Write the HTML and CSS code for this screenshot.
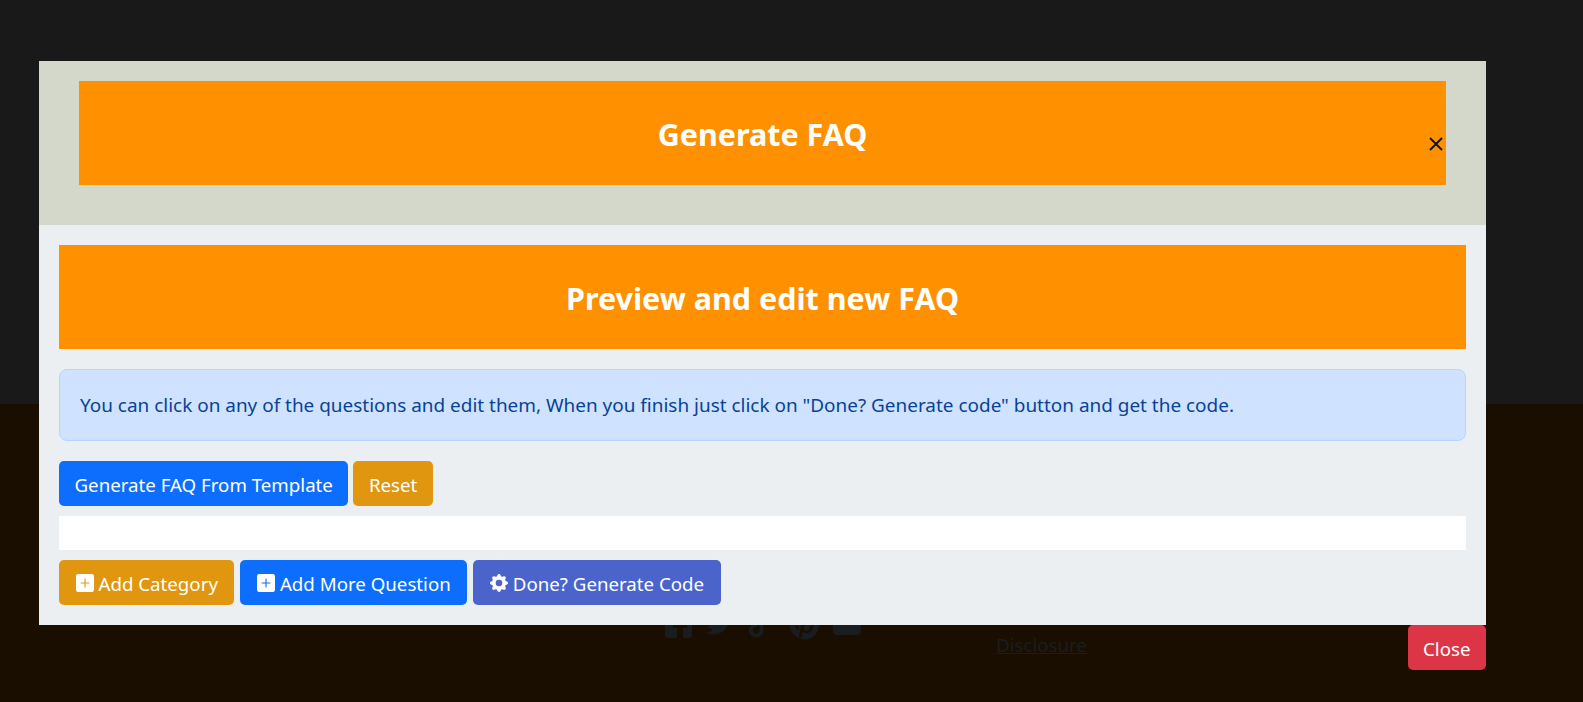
FILE: index.html
```html
<!DOCTYPE html>
<html lang="en">
<head>
<meta charset="utf-8">
<title>Generate FAQ</title>
<link rel="stylesheet" href="styles.css">
</head>
<body>
<div class="page">
  <div class="page-top"></div>
  <footer class="page-footer">
    <div class="socials">
      <svg class="social s-fb" viewBox="0 0 27 27"><path d="M3 0h21a3 3 0 0 1 3 3v21a3 3 0 0 1-3 3h-6V17h4l1-5h-5V9c0-1.500 1-2.500 2.500-2.500H23V2h-4c-4 0-7 3-7 7v3H8v5h4v10H3a3 3 0 0 1-3-3V3a3 3 0 0 1 3-3z"/></svg>
      <svg class="social s-tw" viewBox="0 0 512 512"><path d="M459 152c.3 4.500.3 9.100.3 13.600 0 138.700-105.600 298.600-298.600 298.600-59.500 0-114.700-17.200-161.100-47.100 8.400 1 16.600 1.300 25.300 1.300 49.100 0 94.200-16.600 130.300-44.800-46.100-1-84.800-31.200-98.100-72.800 6.500 1 13 1.600 19.800 1.600 9.400 0 18.800-1.300 27.600-3.600-48.100-9.700-84.100-52-84.100-103v-1.300c14 7.800 30.200 12.700 47.400 13.300-28.300-18.800-46.800-51-46.800-87.400 0-19.500 5.200-37.400 14.300-53 51.700 63.700 129.300 105.300 216.400 109.800-1.600-7.800-2.600-15.900-2.600-24 0-57.800 46.800-104.900 104.900-104.900 30.200 0 57.500 12.700 76.700 33.100 23.700-4.500 46.500-13.300 66.600-25.300-7.800 24.400-24.400 44.800-46.100 57.800 21.100-2.300 41.600-8.100 60.400-16.200-14.300 20.800-32.200 39.300-52.600 54.200z"/></svg>
      <svg class="social s-tt" viewBox="0 0 448 512"><path d="M448 209.900a210.100 210.100 0 0 1-122.800-39.300v178.800A162.600 162.600 0 1 1 185 188.300v89.900a74.600 74.600 0 1 0 52.200 71.200V0h88a121.200 121.200 0 0 0 1.900 22.200h0a122.200 122.200 0 0 0 53.900 80.200 121.400 121.400 0 0 0 67 20.100z"/></svg>
      <svg class="social s-pi" viewBox="0 0 496 512"><path d="M496 256c0 137-111 248-248 248-25.600 0-50.200-3.900-73.400-11.100 10.100-16.500 25.200-43.500 30.800-65 3-11.600 15.400-59 15.400-59 8.100 15.400 31.700 28.500 56.800 28.500 74.800 0 128.700-68.800 128.700-154.300 0-81.900-66.900-143.200-152.900-143.200-107 0-163.900 71.800-163.900 150.100 0 36.400 19.400 81.700 50.300 96.100 4.700 2.200 7.200 1.200 8.300-3.300.8-3.400 5-20.300 6.900-28.100.6-2.500.3-4.700-1.700-7.100-10.100-12.500-18.300-35.300-18.300-56.600 0-54.700 41.400-107.600 112-107.600 60.900 0 103.600 41.500 103.600 100.900 0 67.100-33.900 113.600-78 113.600-24.300 0-42.600-20.100-36.700-44.800 7-29.500 20.500-61.300 20.500-82.600 0-19-10.200-34.900-31.400-34.900-24.900 0-44.900 25.700-44.900 60.200 0 22 7.400 36.800 7.400 36.800s-24.500 103.800-29 123.200c-5 21.400-3 51.600-.9 71.200C65.400 450.900 0 361.100 0 256 0 119 111 8 248 8s248 111 248 248z"/></svg>
      <svg class="social s-yt" viewBox="0 0 28 28"><path d="M4 0h20a4 4 0 0 1 4 4v20a4 4 0 0 1-4 4H4a4 4 0 0 1-4-4V4a4 4 0 0 1 4-4zm7 9v10l9-5z" fill-rule="evenodd"/></svg>
    </div>
    <a class="disclosure" href="#">Disclosure</a>
  </footer>
</div>

<div class="modal">
  <div class="modal-box">
    <header class="modal-head">
      <h1 class="banner">Generate FAQ</h1>
      <button class="close-x" aria-label="Close">
        <svg viewBox="0 0 16 16"><path d="M2 2l12 12M14 2L2 14"/></svg>
      </button>
    </header>
    <div class="modal-body">
      <h2 class="banner banner-sub">Preview and edit new FAQ</h2>
      <div class="alert">You can click on any of the questions and edit them, When you finish just click on "Done? Generate code" button and get the code.</div>
      <div class="btn-row">
        <button class="btn btn-blue">Generate FAQ From Template</button>
        <button class="btn btn-amber">Reset</button>
      </div>
      <div class="white-strip"></div>
      <div class="btn-row btn-row-wide">
        <button class="btn btn-amber">
          <svg class="ico" viewBox="0 0 16 16"><path d="M2 0a2 2 0 0 0-2 2v12a2 2 0 0 0 2 2h12a2 2 0 0 0 2-2V2a2 2 0 0 0-2-2H2zm6.500 4.500v3h3a.5.5 0 0 1 0 1h-3v3a.5.5 0 0 1-1 0v-3h-3a.5.5 0 0 1 0-1h3v-3a.5.5 0 0 1 1 0z"/></svg>
          Add Category
        </button>
        <button class="btn btn-blue">
          <svg class="ico" viewBox="0 0 16 16"><path d="M2 0a2 2 0 0 0-2 2v12a2 2 0 0 0 2 2h12a2 2 0 0 0 2-2V2a2 2 0 0 0-2-2H2zm6.500 4.500v3h3a.5.5 0 0 1 0 1h-3v3a.5.5 0 0 1-1 0v-3h-3a.5.5 0 0 1 0-1h3v-3a.5.5 0 0 1 1 0z"/></svg>
          Add More Question
        </button>
        <button class="btn btn-indigo">
          <svg class="ico" viewBox="0 0 16 16"><path d="M9.405 1.050c-.413-1.400-2.397-1.400-2.810 0l-.1.340a1.464 1.464 0 0 1-2.105.872l-.31-.17c-1.283-.698-2.686.705-1.987 1.987l.169.311c.446.820.023 1.841-.872 2.105l-.34.100c-1.400.413-1.400 2.397 0 2.810l.34.100a1.464 1.464 0 0 1 .872 2.105l-.17.310c-.698 1.283.705 2.686 1.987 1.987l.311-.169a1.464 1.464 0 0 1 2.105.872l.1.340c.413 1.400 2.397 1.400 2.810 0l.1-.340a1.464 1.464 0 0 1 2.105-.872l.31.170c1.283.698 2.686-.705 1.987-1.987l-.169-.311a1.464 1.464 0 0 1 .872-2.105l.34-.1c1.400-.413 1.400-2.397 0-2.810l-.34-.1a1.464 1.464 0 0 1-.872-2.105l.17-.310c.698-1.283-.705-2.686-1.987-1.987l-.311.169a1.464 1.464 0 0 1-2.105-.872l-.1-.340zM8 10.930a2.929 2.929 0 1 1 0-5.860 2.929 2.929 0 0 1 0 5.858z"/></svg>
          Done? Generate Code
        </button>
      </div>
    </div>
    <div class="modal-foot">
      <button class="btn btn-red">Close</button>
    </div>
  </div>
</div>
</body>
</html>
```
FILE: styles.css
```css
* { box-sizing: border-box; }
html, body { margin: 0; height: 100%; }
body {
  font-family: "Noto Sans", "Open Sans", sans-serif;
  font-size: 18.95px;
  line-height: 27px;
  overflow: hidden;
  background: #191919;
}
.page { height: 702px; display: flex; flex-direction: column; }
.page-top { height: 404px; background: #191919; }
.page-footer {
  flex: 1;
  background: #1a0e00;
  display: flex;
  align-items: flex-start;
  padding: 200px 0 0 665px;
  font-size: 18.7px;
}
.socials { display: flex; align-items: flex-start; height: 36px; }
.social { fill: #1a1d20; display: block; }
.s-fb { width: 27px; height: 27px; margin-top: 7px; }
.s-tw { width: 27px; height: 27px; margin-left: 13px; margin-top: 6px; }
.s-tt { width: 20px; height: 28px; margin-left: 17px; margin-top: 8px; }
.s-pi { width: 29px; height: 30px; margin-left: 21px; margin-top: 6px; }
.s-yt { width: 28px; height: 28px; margin-left: 14px; margin-top: 3px; }
.disclosure {
  margin: 27px 0 0 135px;
  color: #1a1d20;
  text-decoration: underline;
}
.modal { position: absolute; left: 39px; top: 61px; width: 1447px; }
.modal-box { display: flex; flex-direction: column; }
.modal-head {
  position: relative;
  background: #d4d8ca;
  padding: 20px 40px 40px;
}
.banner {
  margin: 0;
  background: #ff9100;
  color: #fff;
  font-weight: 700;
  font-size: 30.5px;
  line-height: 40px;
  text-align: center;
  padding: 33px 0 31px;
}
.close-x {
  position: absolute;
  left: 1389px;
  top: 75px;
  width: 16px;
  height: 16px;
  padding: 0;
  border: 0;
  background: none;
}
.close-x svg { display: block; width: 16px; height: 16px; fill: none; stroke: #111; stroke-width: 1.800; }
.modal-body { background: #ebeff2; padding: 20px; }
.banner-sub { margin-bottom: 20px; }
.alert {
  background: #cfe2ff;
  border: 1px solid #b6d4fe;
  border-radius: 8px;
  color: #084298;
  padding: 22px 20px 18px;
  height: 72px;
  margin-bottom: 20px;
}
.btn-row { display: flex; gap: 5px; }
.btn-row-wide { gap: 6px; }
.btn {
  font: inherit;
  font-size: 18.7px;
  color: #fff;
  border: 1px solid transparent;
  border-radius: 5px;
  padding: 9px 14.5px 7px;
  height: 45px;
  display: flex;
  align-items: center;
  gap: 5px;
}
.btn-row-wide .btn { padding-left: 15.5px; padding-right: 15.5px; }
.btn-blue { background: #0d6efd; }
.btn-amber { background: #e0960e; }
.btn-indigo { background: #4b64cb; }
.btn-red { background: #dc3545; }
.ico { width: 18px; height: 18px; margin-bottom: 2px; fill: #fff; flex: none; }
.white-strip { height: 34px; background: #fff; margin: 10px 0; }
.modal-foot { display: flex; justify-content: flex-end; }
```
